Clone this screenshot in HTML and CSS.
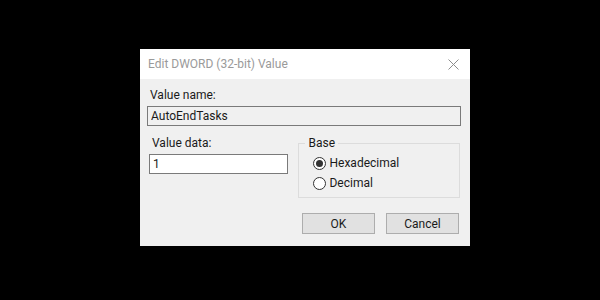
FILE: index.html
```html
<!DOCTYPE html>
<html lang="en">
<head>
    <meta charset="UTF-8">
    <meta name="viewport" content="width=device-width, initial-scale=1.0">
    <title>Edit DWORD (32-bit) Value</title>
    <link rel="stylesheet" href="styles.css">
</head>
<body>
    <div class="dialog">
        <div class="titlebar">
            <span class="title">Edit DWORD (32-bit) Value</span>
            <svg class="close" width="11" height="11" viewBox="0 0 11 11">
                <path d="M0.5 0.5 L10.5 10.5 M10.5 0.5 L0.5 10.5" stroke="#8c8c8c" stroke-width="1" fill="none"/>
            </svg>
        </div>
        <div class="content">
            <label class="lbl" for="name">Value name:</label>
            <input class="namebox" id="name" type="text" value="AutoEndTasks" readonly>
            <div class="row">
                <div class="datacol">
                    <label class="lbl" for="data">Value data:</label>
                    <input class="databox" id="data" type="text" value="1">
                </div>
                <fieldset class="base">
                    <legend>Base</legend>
                    <label class="radio"><span class="dot checked"></span>Hexadecimal</label>
                    <label class="radio"><span class="dot"></span>Decimal</label>
                </fieldset>
            </div>
            <div class="buttons">
                <button class="btn">OK</button>
                <button class="btn">Cancel</button>
            </div>
        </div>
    </div>
</body>
</html>
```

FILE: styles.css
```css
body {
    margin: 0;
    background: #000;
    font-family: Roboto, "Noto Sans", sans-serif;
    font-size: 12px;
    color: #1a1a1a;
}
.dialog {
    margin: 49px 0 0 140px;
    width: 330px;
    height: 197px;
    background: #f0f0f0;
    display: flex;
    flex-direction: column;
}
.titlebar {
    height: 30px;
    background: #fff;
    display: flex;
    align-items: center;
    justify-content: space-between;
    padding: 0 11px 0 8px;
}
.title {
    color: #9a9a9a;
    font-size: 12px;
}
.content {
    padding: 9px 10px 0 7px;
    display: flex;
    flex-direction: column;
}
.lbl {
    display: block;
    line-height: 15px;
    padding-left: 3px;
}
input {
    font-family: inherit;
    font-size: 12px;
    color: #1a1a1a;
    box-sizing: border-box;
    outline: none;
    margin: 0;
    padding: 0 0 0 3px;
}
.namebox {
    width: 314px;
    height: 20px;
    margin-top: 3px;
    border: 1px solid #7a7a7a;
    background: #f0f0f0;
}
.row {
    display: flex;
    margin-top: 10px;
}
.datacol {
    width: 151px;
    padding-left: 2px;
}
.databox {
    width: 139px;
    height: 20px;
    margin-top: 3px;
    border: 1px solid #7a7a7a;
    background: #fff;
}
.base {
    margin: 0;
    padding: 7px 0 4px 14px;
    width: 163px;
    height: 62px;
    box-sizing: border-box;
    border: 1px solid #dcdcdc;
    display: flex;
    flex-direction: column;
    gap: 7px;
}
legend {
    padding: 0 3px;
    margin-left: -8px;
    line-height: 14px;
}
.radio {
    display: flex;
    align-items: center;
    gap: 3px;
    line-height: 13px;
}
.dot {
    width: 11px;
    height: 11px;
    border: 1px solid #333;
    border-radius: 50%;
    background: #fff;
    position: relative;
}
.dot.checked::after {
    content: "";
    position: absolute;
    left: 2px;
    top: 2px;
    width: 7px;
    height: 7px;
    border-radius: 50%;
    background: #333;
}
.buttons {
    display: flex;
    justify-content: flex-end;
    gap: 11px;
    margin-top: 15px;
    padding-right: 1px;
}
.btn {
    width: 73px;
    height: 21px;
    font-family: inherit;
    font-size: 12px;
    color: #1a1a1a;
    background: #e1e1e1;
    border: 1px solid #adadad;
    padding: 0;
}
```
